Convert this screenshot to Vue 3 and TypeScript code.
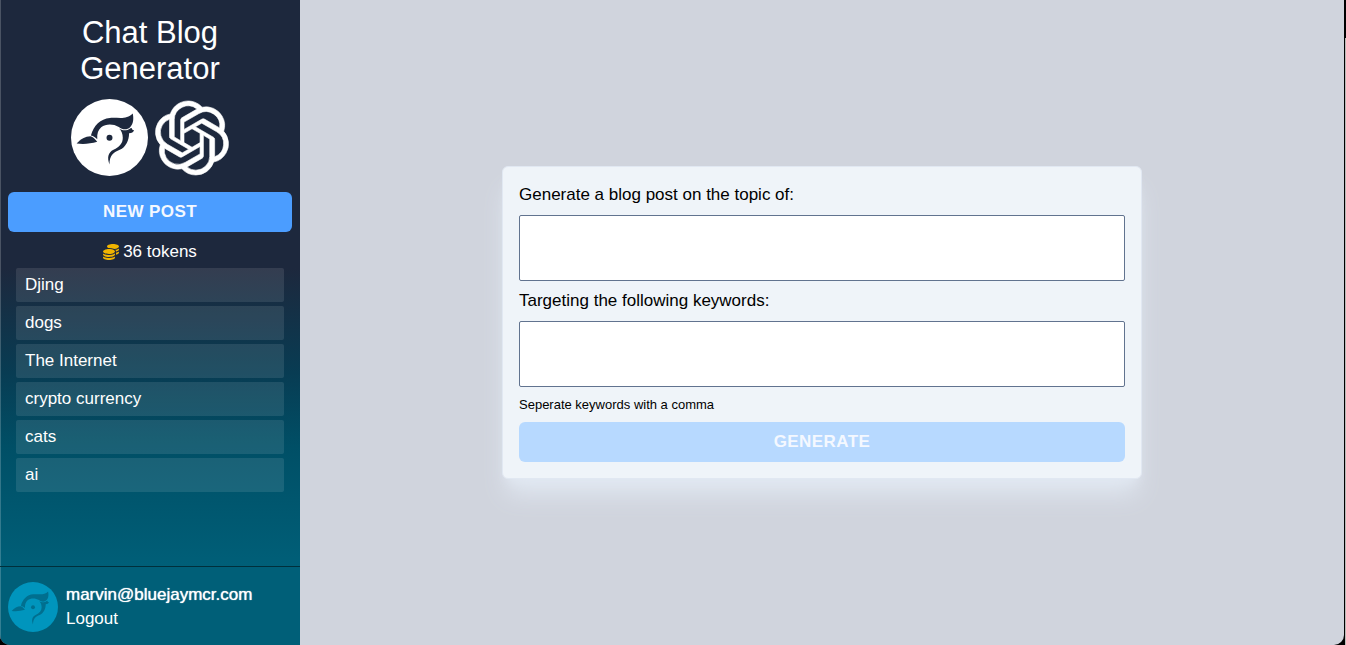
<script setup lang="ts">
import { ref } from 'vue'

const posts: string[] = ['Djing', 'dogs', 'The Internet', 'crypto currency', 'cats', 'ai']
const tokens = 36
const topic = ref('')
const keywords = ref('')
</script>

<template>
  <div class="window">
    <div class="app">
      <aside class="sidebar">
        <header class="head">
          <h1 class="title">Chat Blog Generator</h1>
          <div class="logos">
            <svg class="bird-logo" viewBox="33 26 232 232" aria-hidden="true">
              <defs>
                <g id="bird">
                  <path d="M93 136C101 106 122 85 150 83C176 81 200 90 219 70C222 84 222 101 211 111C202 120 188 119 177 110C160 100 138 100 124 111C115 119 111 130 112 147C107 142 101 138 93 136Z" />
                  <path d="M178 115C187 122 201 123 212 114L216 113C216 117 218 119 223 120C221 126 216 129 208 129C208 151 198 171 180 179C162 186 149 195 149 223C141 202 145 187 161 179C179 171 189 160 189 143C189 131 185 122 178 115Z" />
                  <path d="M50 160C62 147 76 138 92 138C99 140 106 147 112 155C91 161 70 163 50 160Z" />
                  <circle cx="149" cy="143" r="9" />
                </g>
              </defs>
              <circle cx="149" cy="142" r="116" fill="#fff" />
              <use href="#bird" fill="#1d283d" />
            </svg>
            <svg class="ai-logo" viewBox="0 0 24 24" aria-hidden="true">
              <path d="M22.2819 9.8211a5.9847 5.9847 0 0 0-.5157-4.9108 6.0462 6.0462 0 0 0-6.5098-2.9A6.0651 6.0651 0 0 0 4.9807 4.1818a5.9847 5.9847 0 0 0-3.9977 2.9 6.0462 6.0462 0 0 0 .7427 7.0966 5.98 5.98 0 0 0 .511 4.9107 6.051 6.051 0 0 0 6.5146 2.9001A5.9847 5.9847 0 0 0 13.2599 24a6.0557 6.0557 0 0 0 5.7718-4.2058 5.9894 5.9894 0 0 0 3.9977-2.9001 6.0557 6.0557 0 0 0-.7475-7.073zm-9.022 12.6081a4.4755 4.4755 0 0 1-2.8764-1.0408l.1419-.0804 4.7783-2.7582a.7948.7948 0 0 0 .3927-.6813v-6.7369l2.02 1.1686a.071.071 0 0 1 .038.052v5.5826a4.504 4.504 0 0 1-4.4945 4.4944zm-9.6607-4.1254a4.4708 4.4708 0 0 1-.5346-3.0137l.142.0852 4.783 2.7582a.7712.7712 0 0 0 .7806 0l5.8428-3.3685v2.3324a.0804.0804 0 0 1-.0332.0615L9.74 19.9502a4.4992 4.4992 0 0 1-6.1408-1.6464zM2.3408 7.8956a4.485 4.485 0 0 1 2.3655-1.9728V11.6a.7664.7664 0 0 0 .3879.6765l5.8144 3.3543-2.0201 1.1685a.0757.0757 0 0 1-.071 0l-4.8303-2.7865A4.504 4.504 0 0 1 2.3408 7.872zm16.5963 3.8558L13.1038 8.364 15.1192 7.2a.0757.0757 0 0 1 .071 0l4.8303 2.7913a4.4944 4.4944 0 0 1-.6765 8.1042v-5.6772a.79.79 0 0 0-.407-.667zm2.0107-3.0231l-.142-.0852-4.7735-2.7818a.7759.7759 0 0 0-.7854 0L9.409 9.2297V6.8974a.0662.0662 0 0 1 .0284-.0615l4.8303-2.7866a4.4992 4.4992 0 0 1 6.6802 4.66zM8.3065 12.863l-2.02-1.1638a.0804.0804 0 0 1-.038-.0567V6.0742a4.4992 4.4992 0 0 1 7.3757-3.4537l-.142.0805L8.704 5.459a.7948.7948 0 0 0-.3927.6813zm1.0976-2.3654l2.602-1.4998 2.6069 1.4998v2.9994l-2.5974 1.4997-2.6067-1.4997Z" />
            </svg>
          </div>
          <button type="button" class="btn">NEW POST</button>
          <a href="#" class="tokens">
            <svg class="coins" viewBox="0 0 512 512" aria-hidden="true">
              <path d="M512 80c0 18-14.3 34.6-38.4 48c-29.1 16.1-72.5 27.5-122.3 30.9c-3.7-1.8-7.4-3.5-11.3-5C300.6 137.4 248.2 128 192 128c-8.3 0-16.4 .2-24.5 .6l-1.1-.6C142.3 114.6 128 98 128 80c0-44.2 86-80 192-80S512 35.8 512 80zM160.7 161.1c10.2-.7 20.7-1.1 31.3-1.1c62.2 0 117.4 12.3 152.5 31.4C369.3 204.9 384 221.7 384 240c0 4-.7 7.9-2.1 11.7c-4.6 13.2-17 25.3-35 35.5c-.4 .2-.9 .5-1.3 .7c-35 19.4-90.8 32-153.6 32c-59.6 0-112.9-11.3-148.2-29.1c-1.9-.9-3.7-1.9-5.5-2.9C14.3 274.6 0 258 0 240c0-34.8 53.4-64.5 128-75.4c10.5-1.5 21.4-2.7 32.7-3.5zM416 240c0-21.9-10.6-39.9-24.1-53.4c28.3-4.4 54.2-11.4 76.2-20.5c16.3-6.8 31.5-15.2 43.9-25.5V176c0 19.3-16.5 37.1-43.8 50.9c-14.6 7.4-32.4 13.7-52.4 18.5c.1-1.8 .2-3.5 .2-5.3zm-32 96c0 18-14.3 34.6-38.4 48c-1.8 1-3.6 1.9-5.5 2.9C304.9 404.7 251.6 416 192 416c-62.8 0-118.6-12.6-153.6-32C14.3 370.6 0 354 0 336V300.6c12.5 10.3 27.6 18.7 43.9 25.5C83.4 342.6 135.8 352 192 352s108.6-9.4 148.1-25.9c7.8-3.2 15.3-6.9 22.4-10.9c6.1-3.4 11.8-7.2 17.2-11.2c1.5-1.1 2.9-2.3 4.3-3.4V336zm32 0V278.1c19-4.2 36.5-9.5 52.1-16c16.3-6.8 31.5-15.2 43.9-25.5V272c0 10.5-5 21-14.9 30.9c-16.3 16.3-45 29.7-81.3 38.4c.1-1.7 .2-3.5 .2-5.3zM192 448c56.2 0 108.6-9.4 148.1-25.9c16.3-6.8 31.5-15.2 43.9-25.5V432c0 44.2-86 80-192 80S0 476.2 0 432V396.6c12.5 10.3 27.6 18.7 43.9 25.5C83.4 438.6 135.8 448 192 448z" />
            </svg>
            <span>{{ tokens }} tokens</span>
          </a>
        </header>
        <nav class="posts">
          <a v-for="post in posts" :key="post" href="#" class="post">{{ post }}</a>
        </nav>
        <footer class="account">
          <svg class="avatar" viewBox="33 26 232 232" aria-hidden="true">
            <circle cx="149" cy="142" r="116" fill="#0095bd" />
            <use href="#bird" fill="#006f8f" />
          </svg>
          <div class="who">
            <div class="email">marvin@bluejaymcr.com</div>
            <a href="#">Logout</a>
          </div>
        </footer>
      </aside>
      <main class="main">
        <form class="card" @submit.prevent>
          <label for="topic">Generate a blog post on the topic of:</label>
          <textarea id="topic" v-model="topic" class="field"></textarea>
          <label for="keywords">Targeting the following keywords:</label>
          <textarea id="keywords" v-model="keywords" class="field"></textarea>
          <small class="hint">Seperate keywords with a comma</small>
          <button type="submit" class="btn" disabled>GENERATE</button>
        </form>
      </main>
    </div>
    <div class="edge"></div>
  </div>
</template>

<style>
body {
  background: #000;
}
</style>

<style scoped>
* {
  box-sizing: border-box;
}
.window {
  position: relative;
  height: 100vh;
  padding-right: 2px;
  overflow: hidden;
  font: 17px/24px "Liberation Sans", Arial, sans-serif;
}
.edge {
  position: absolute;
  top: 38px;
  right: 0;
  bottom: 0;
  width: 1px;
  background: #bdbcb8;
}
.app {
  display: grid;
  grid-template-columns: 300px 1fr;
  height: 100%;
  overflow: hidden;
  border-radius: 0 0 10px 10px;
  background: #d0d4dd;
}
a {
  color: inherit;
  text-decoration: none;
}
.sidebar {
  display: flex;
  flex-direction: column;
  min-height: 0;
  color: #fff;
  background: #1d283d;
  box-shadow: inset 1px 0 rgba(255, 255, 255, 0.2);
}
.head {
  padding: 15px 8px 4px;
  text-align: center;
}
.title {
  margin: 0 48px;
  font-size: 31px;
  font-weight: 400;
  line-height: 36px;
}
.logos {
  display: flex;
  justify-content: center;
  align-items: center;
  gap: 7px;
  padding: 12px 0 16px;
}
.bird-logo {
  width: 77px;
  height: 77px;
}
.ai-logo {
  width: 74px;
  height: 74px;
  fill: #fff;
  stroke: #fff;
  stroke-width: 0.2;
  overflow: visible;
}
.btn {
  display: block;
  width: 100%;
  height: 40px;
  padding: 0 16px;
  border: 0;
  border-radius: 6px;
  background: #4b9dff;
  color: #f4f8ff;
  font: 700 17px/24px "Liberation Sans", Arial, sans-serif;
  letter-spacing: 0.025em;
  cursor: pointer;
}
.btn:disabled {
  background: #b7d9ff;
  cursor: not-allowed;
}
.tokens {
  display: flex;
  justify-content: center;
  align-items: center;
  gap: 4px;
  margin-top: 8px;
}
.coins {
  width: 16px;
  height: 16px;
  fill: #f0b400;
}
.posts {
  flex: 1;
  min-height: 0;
  padding: 0 16px;
  overflow: auto;
  background: linear-gradient(#1d283d, #083c53 35%, #004f66 60%, #005f78);
  box-shadow: inset 1px 0 rgba(255, 255, 255, 0.2);
}
.post {
  display: block;
  margin-bottom: 4px;
  padding: 5px 9px;
  border-radius: 2px;
  background: rgba(255, 255, 255, 0.1);
  white-space: nowrap;
  overflow: hidden;
  text-overflow: ellipsis;
}
.account {
  display: flex;
  align-items: center;
  gap: 8px;
  padding: 15px 8px 13px;
  border-top: 1px solid #00303c;
  background: #005f78;
  box-shadow: inset 1px 0 rgba(255, 255, 255, 0.2);
}
.avatar {
  width: 50px;
  height: 50px;
}
.email {
  text-shadow: 0 0 1px #fff;
}
.main {
  display: flex;
  justify-content: center;
  align-items: center;
  min-width: 0;
}
.card {
  width: 100%;
  max-width: 640px;
  padding: 16px;
  border: 1px solid #e1e8f2;
  border-radius: 6px;
  background: #eff4f9;
  box-shadow: 0 20px 25px -5px #e1e8f2, 0 8px 10px -6px #e1e8f2;
  color: #000;
}
label,
.hint {
  display: block;
}
.field {
  display: block;
  width: 100%;
  height: 66px;
  margin: 8px 0;
  padding: 8px 16px;
  border: 1px solid #61738f;
  border-radius: 2px;
  background: #fff;
  font: inherit;
  resize: none;
}
.hint {
  margin-bottom: 8px;
  font-size: 13px;
  line-height: 19px;
}
</style>
